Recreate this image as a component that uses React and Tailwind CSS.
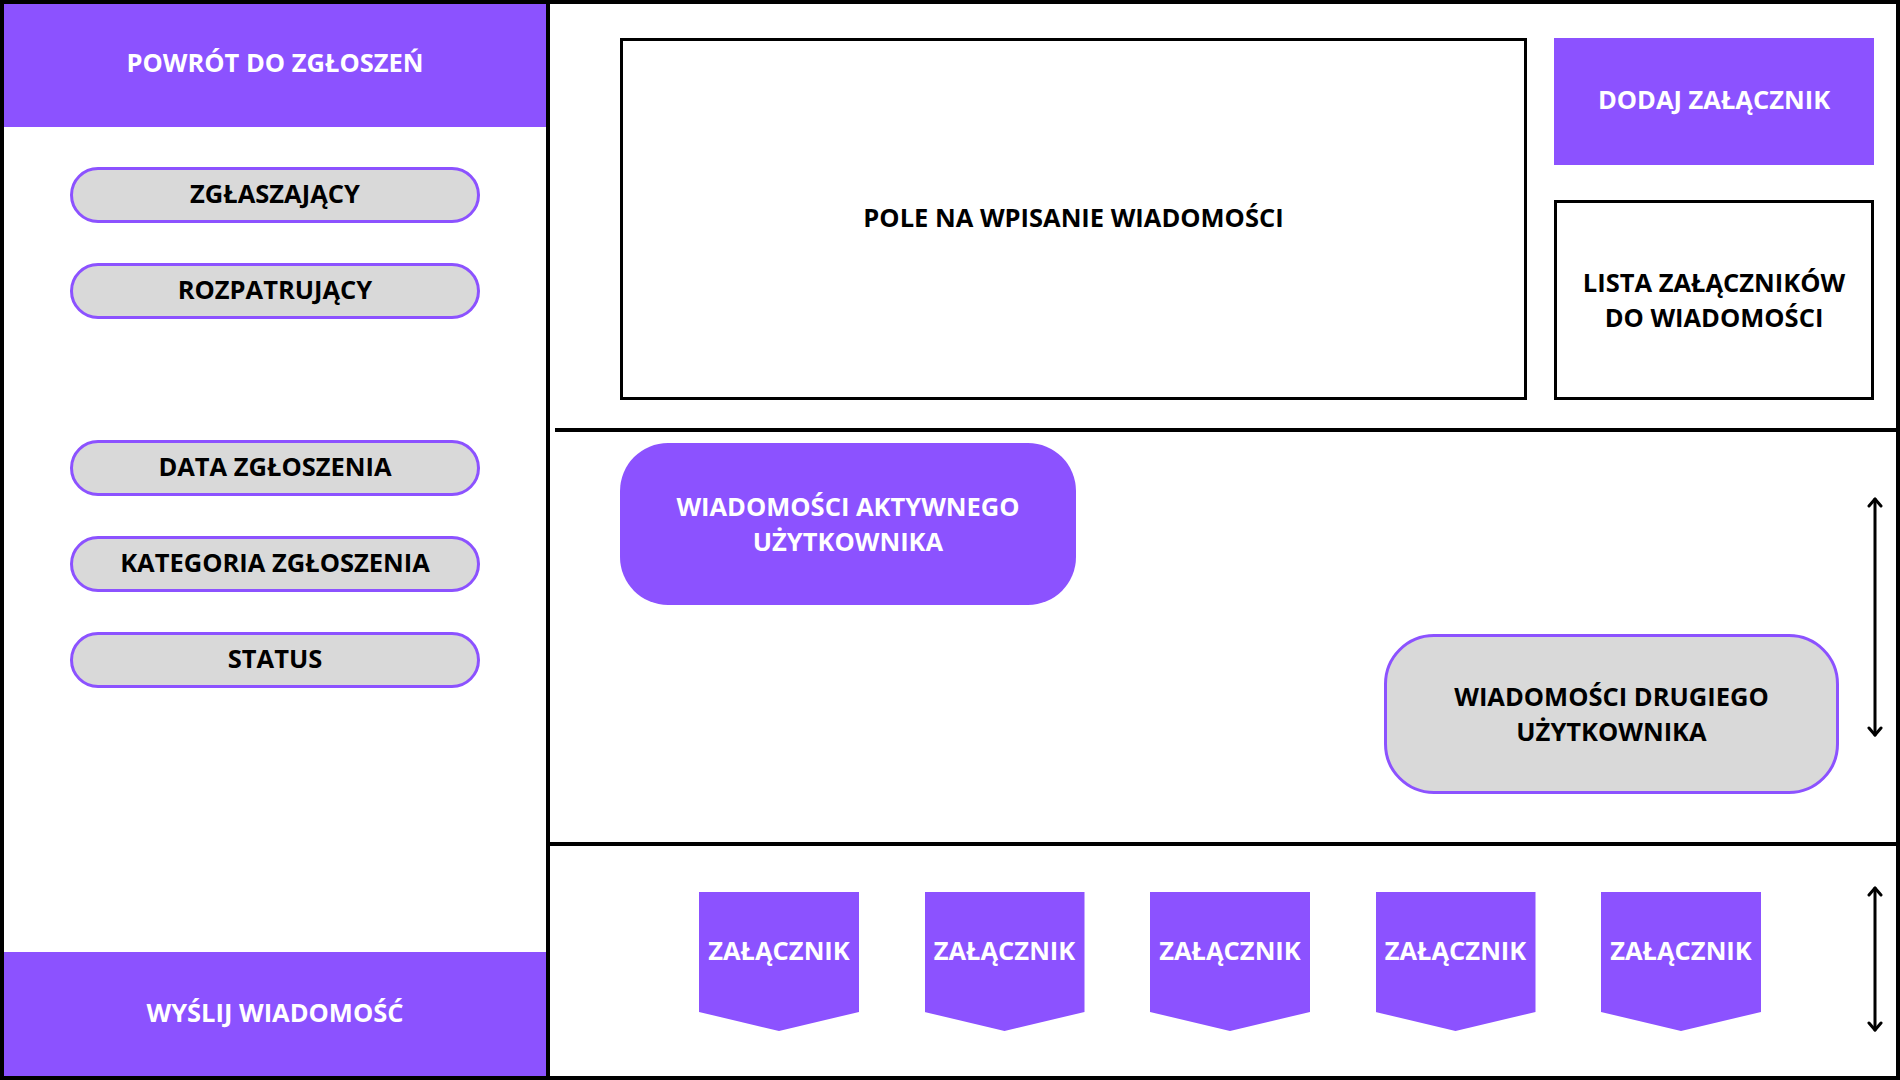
import React from 'react';

const DETAILS_TOP = ['ZGŁASZAJĄCY', 'ROZPATRUJĄCY'];
const DETAILS_BOTTOM = ['DATA ZGŁOSZENIA', 'KATEGORIA ZGŁOSZENIA', 'STATUS'];

function ScrollArrow({ height }) {
  return (
    <svg
      width="18"
      height={height}
      viewBox={`0 0 18 ${height}`}
      fill="none"
      stroke="#000"
      strokeWidth="3"
      strokeLinecap="round"
      strokeLinejoin="round"
    >
      <path d={`M9 2 V${height - 2}`} />
      <path d="M3 9 L9 2 L15 9" />
      <path d={`M3 ${height - 9} L9 ${height - 2} L15 ${height - 9}`} />
    </svg>
  );
}

function DetailPill({ label }) {
  return (
    <div className="w-[410px] h-[56px] pb-[4px] rounded-full border-[3px] border-[#8c52ff] bg-[#d9d9d9] flex items-center justify-center text-black text-[25.5px]">
      {label}
    </div>
  );
}

function Attachment() {
  return (
    <div className="w-[160px] h-[139px] pb-[23px] bg-[#8c52ff] [clip-path:polygon(0_0,100%_0,100%_86.3%,50%_100%,0_86.3%)] flex items-center justify-center text-white text-[25.5px]">
      ZAŁĄCZNIK
    </div>
  );
}

export default function App() {
  return (
    <div className="w-[1900px] h-[1080px] border-4 border-black bg-white flex font-['Open_Sans',sans-serif] font-bold leading-[35px]">
      {/* sidebar */}
      <aside className="w-[546px] shrink-0 border-r-4 border-black flex flex-col">
        <button className="h-[123px] pb-[6px] bg-[#8c52ff] flex items-center justify-center text-white text-[25.5px]">
          POWRÓT DO ZGŁOSZEŃ
        </button>
        <div className="flex flex-col items-center pt-[40px]">
          <div className="flex flex-col gap-[40px]">
            {DETAILS_TOP.map((d) => (
              <DetailPill key={d} label={d} />
            ))}
          </div>
          <div className="flex flex-col gap-[40px] mt-[121px]">
            {DETAILS_BOTTOM.map((d) => (
              <DetailPill key={d} label={d} />
            ))}
          </div>
        </div>
        <button className="mt-auto h-[124px] pb-[3px] bg-[#8c52ff] flex items-center justify-center text-white text-[25.5px]">
          WYŚLIJ WIADOMOŚĆ
        </button>
      </aside>

      <main className="flex-1 flex flex-col">
        {/* composer */}
        <section className="h-[424px] flex items-start pl-[70px] pt-[34px] gap-[27px]">
          <div className="w-[907px] h-[362px] pb-[4px] border-[3px] border-black flex items-center justify-center text-black text-[25.5px]">
            POLE NA WPISANIE WIADOMOŚCI
          </div>
          <div className="w-[320px] flex flex-col gap-[35px]">
            <button className="h-[127px] pb-[4px] bg-[#8c52ff] flex items-center justify-center text-white text-[25.5px]">
              DODAJ ZAŁĄCZNIK
            </button>
            <div className="h-[200px] border-[3px] border-black flex items-center justify-center text-center text-black text-[25.5px]">
              LISTA ZAŁĄCZNIKÓW
              <br />
              DO WIADOMOŚCI
            </div>
          </div>
        </section>
        <div className="h-[4px] ml-[5px] bg-black" />

        {/* messages */}
        <section className="h-[410px] flex">
          <div className="flex-1 flex flex-col">
            <div className="ml-[70px] mt-[11px] w-[456px] h-[162px] rounded-[48px] bg-[#8c52ff] flex items-center justify-center text-center text-white text-[25.5px]">
              WIADOMOŚCI AKTYWNEGO
              <br />
              UŻYTKOWNIKA
            </div>
            <div className="self-end mr-[27px] mt-[29px] w-[455px] h-[160px] rounded-[50px] border-[3px] border-[#8c52ff] bg-[#d9d9d9] flex items-center justify-center text-center text-black text-[25.5px]">
              WIADOMOŚCI DRUGIEGO
              <br />
              UŻYTKOWNIKA
            </div>
          </div>
          <div className="w-[18px] mr-[12px] pt-[65px]">
            <ScrollArrow height={240} />
          </div>
        </section>
        <div className="h-[4px] bg-black" />

        {/* attachments */}
        <section className="flex-1 flex items-start">
          <div className="flex gap-[65.5px] pl-[149px] pt-[46px]">
            {[0, 1, 2, 3, 4].map((i) => (
              <Attachment key={i} />
            ))}
          </div>
          <div className="ml-auto w-[18px] mr-[12px] pt-[40px]">
            <ScrollArrow height={146} />
          </div>
        </section>
      </main>
    </div>
  );
}
